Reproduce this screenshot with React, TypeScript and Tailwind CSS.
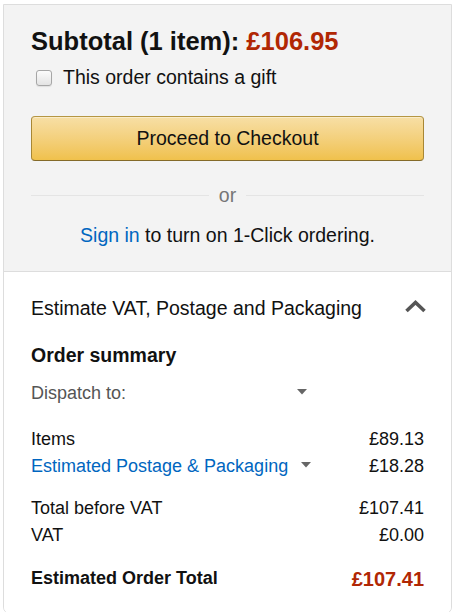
import React from 'react';

const Caret = () => (
  <svg width="10" height="6" viewBox="0 0 10 6" className="block">
    <path d="M0 0 L10 0 L5 5.5 Z" fill="#666" />
  </svg>
);

function Row({ label, value, link }: { label: string; value: string; link?: boolean }) {
  return (
    <div className="flex h-[27px] items-center justify-between text-[18px]">
      {link ? (
        <div className="flex items-center">
          <span className="text-[#0066c0]">{label}</span>
          <span className="ml-[13px] mt-[-3px]">
            <Caret />
          </span>
        </div>
      ) : (
        <span>{label}</span>
      )}
      <span>{value}</span>
    </div>
  );
}

export default function App() {
  return (
    <div className="min-h-screen w-full bg-white pt-[4px] pl-[3px] text-[19.5px] text-[#111] font-['Liberation_Sans',Arial,sans-serif]">
      <div className="w-[449px] border border-[#dddddd] rounded-b-[7px] overflow-hidden">
        {/* checkout box */}
        <section className="bg-[#f3f3f3] border-b border-[#dddddd] px-[27px] pt-[21px] pb-[23px]">
          <div className="h-[30px] leading-[30px] text-[25.5px] font-bold">
            Subtotal (1 item): <span className="text-[#b12704]">£106.95</span>
          </div>
          <label className="mt-[8px] flex h-[27px] items-center pl-[5px]">
            <span className="h-[16px] w-[16px] rounded-[3px] border border-[#a6a6a6] bg-gradient-to-b from-[#fcfcfc] to-[#e3e3e3] shadow-[0_1px_1px_rgba(0,0,0,0.08)]" />
            <span className="ml-[11px]">This order contains a gift</span>
          </label>
          <button className="mt-[25px] flex h-[45px] w-full items-center justify-center rounded-[4px] border border-[#a88734] border-t-[#b59643] border-b-[#846a29] bg-gradient-to-b from-[#f7dfa5] to-[#f0c14b] text-[19.5px] text-[#111] shadow-[inset_0_1px_0_rgba(255,255,255,0.4)]">
            Proceed to Checkout
          </button>
          <div className="mt-[22px] flex h-[24px] items-center">
            <div className="h-px flex-1 bg-[#e4e4e4]" />
            <span className="mx-[10px] mt-[2px] text-[#767676]">or</span>
            <div className="h-px flex-1 bg-[#e4e4e4]" />
          </div>
          <p className="mt-[15px] h-[26px] text-center leading-[26px]">
            <a className="text-[#0066c0]">Sign in</a> to turn on 1-Click ordering.
          </p>
        </section>

        {/* estimate */}
        <section className="bg-white px-[27px] pt-[24px] pb-[21px]">
          <div className="flex h-[26px] items-center justify-between">
            <span>Estimate VAT, Postage and Packaging</span>
            <svg width="23" height="13" viewBox="0 0 23 13" className="mr-[-3px] mt-[-6px]">
              <path d="M2.5 11 L11.5 2.5 L20.5 11" fill="none" stroke="#555" strokeWidth="3.6" />
            </svg>
          </div>
          <div className="mt-[20px] h-[26px] leading-[26px] font-bold">Order summary</div>
          <div className="mt-[12px] flex h-[26px] w-[276px] items-center justify-between text-[18px] text-[#555]">
            <span>Dispatch to:</span>
            <span className="mt-[-3px]">
              <Caret />
            </span>
          </div>
          <div className="mt-[20px]">
            <Row label="Items" value="£89.13" />
            <Row label="Estimated Postage & Packaging" value="£18.28" link />
          </div>
          <div className="mt-[15px]">
            <Row label="Total before VAT" value="£107.41" />
            <Row label="VAT" value="£0.00" />
          </div>
          <div className="mt-[16px] flex h-[27px] items-center justify-between font-bold">
            <span className="text-[18px]">Estimated Order Total</span>
            <span className="text-[20px] text-[#b12704]">£107.41</span>
          </div>
        </section>
      </div>
    </div>
  );
}
